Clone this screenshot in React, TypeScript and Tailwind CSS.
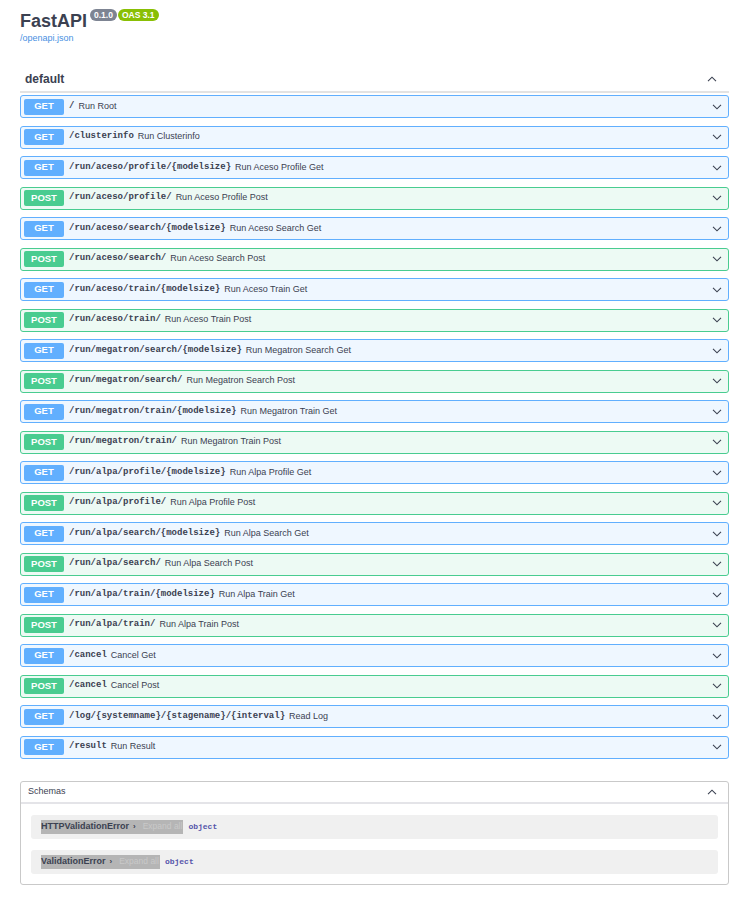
const ops: { method: 'GET' | 'POST'; path: string; summary: string }[] = [
  { method: 'GET', path: '/', summary: 'Run Root' },
  { method: 'GET', path: '/clusterinfo', summary: 'Run Clusterinfo' },
  { method: 'GET', path: '/run/aceso/profile/{modelsize}', summary: 'Run Aceso Profile Get' },
  { method: 'POST', path: '/run/aceso/profile/', summary: 'Run Aceso Profile Post' },
  { method: 'GET', path: '/run/aceso/search/{modelsize}', summary: 'Run Aceso Search Get' },
  { method: 'POST', path: '/run/aceso/search/', summary: 'Run Aceso Search Post' },
  { method: 'GET', path: '/run/aceso/train/{modelsize}', summary: 'Run Aceso Train Get' },
  { method: 'POST', path: '/run/aceso/train/', summary: 'Run Aceso Train Post' },
  { method: 'GET', path: '/run/megatron/search/{modelsize}', summary: 'Run Megatron Search Get' },
  { method: 'POST', path: '/run/megatron/search/', summary: 'Run Megatron Search Post' },
  { method: 'GET', path: '/run/megatron/train/{modelsize}', summary: 'Run Megatron Train Get' },
  { method: 'POST', path: '/run/megatron/train/', summary: 'Run Megatron Train Post' },
  { method: 'GET', path: '/run/alpa/profile/{modelsize}', summary: 'Run Alpa Profile Get' },
  { method: 'POST', path: '/run/alpa/profile/', summary: 'Run Alpa Profile Post' },
  { method: 'GET', path: '/run/alpa/search/{modelsize}', summary: 'Run Alpa Search Get' },
  { method: 'POST', path: '/run/alpa/search/', summary: 'Run Alpa Search Post' },
  { method: 'GET', path: '/run/alpa/train/{modelsize}', summary: 'Run Alpa Train Get' },
  { method: 'POST', path: '/run/alpa/train/', summary: 'Run Alpa Train Post' },
  { method: 'GET', path: '/cancel', summary: 'Cancel Get' },
  { method: 'POST', path: '/cancel', summary: 'Cancel Post' },
  { method: 'GET', path: '/log/{systemname}/{stagename}/{interval}', summary: 'Read Log' },
  { method: 'GET', path: '/result', summary: 'Run Result' },
]

function Chevron({ up = false }: { up?: boolean }) {
  return (
    <svg width="10" height="6" viewBox="0 0 10 6" className="shrink-0">
      <path
        d={up ? 'M1 5.2 5 1.2 9 5.2' : 'M1 0.8 5 4.8 9 0.8'}
        fill="none"
        stroke="#3b4151"
        strokeWidth="1.1"
      />
    </svg>
  )
}

function OpRow({ method, path, summary }: { method: 'GET' | 'POST'; path: string; summary: string }) {
  const get = method === 'GET'
  return (
    <div
      className={
        get
          ? 'mb-[7.5px] flex h-[23px] items-center rounded-[3px] border border-[#61affe] bg-[#eff7ff] pl-[3px] pr-[6px]'
          : 'mb-[7.5px] flex h-[23px] items-center rounded-[3px] border border-[#49cc90] bg-[#edfaf4] pl-[3px] pr-[6px]'
      }
    >
      <span
        className={
          get
            ? 'flex h-[16px] w-[40px] shrink-0 items-center justify-center rounded-[2px] bg-[#61affe] text-[9.5px] font-bold text-white'
            : 'flex h-[16px] w-[40px] shrink-0 items-center justify-center rounded-[2px] bg-[#49cc90] text-[9.5px] font-bold text-white'
        }
      >
        {method}
      </span>
      <span className="ml-[5px] font-['Liberation_Mono',monospace] text-[9px] font-bold text-[#3b4151]">{path}</span>
      <span className="ml-[4px] flex-1 text-[9px] text-[#3b4151]">{summary}</span>
      <Chevron />
    </div>
  )
}

function SchemaRow({ name }: { name: string }) {
  return (
    <div className="flex h-[24px] items-center rounded-[3px] bg-[#f0f0f0] px-[10px]">
      <span className="flex h-[14px] items-center bg-[#b5b5b5] pr-[1px]">
        <span className="text-[9px] font-bold text-[#3b4151]">{name}</span>
        <span className="ml-[4px] text-[8px] font-bold text-[#3b4151]">›</span>
        <span className="ml-[7px] text-[8.5px] text-[#c9c9c9]">Expand all</span>
      </span>
      <span className="ml-[5px] font-['Liberation_Mono',monospace] text-[8px] font-bold text-[#5555aa]">object</span>
    </div>
  )
}

export default function App() {
  return (
    <div className="min-h-screen bg-white px-5 pt-[9px] font-['Liberation_Sans',Arial,sans-serif] text-[#3b4151]">
      <div className="flex items-start">
        <h2 className="text-[18px] font-bold leading-[24px] text-[#3b4151]">FastAPI</h2>
        <span className="ml-[3px] flex h-[12px] items-center rounded-full bg-[#7d8492] px-[4px] text-[8.5px] font-bold text-white">
          0.1.0
        </span>
        <span className="ml-[1px] flex h-[12px] items-center rounded-full bg-[#89bf04] px-[4px] text-[8.5px] font-bold text-white">
          OAS 3.1
        </span>
      </div>
      <a className="block text-[9px] leading-[10px] text-[#4990e2]">/openapi.json</a>

      <div className="mt-[24px] flex h-[26px] items-center border-b-2 border-[#e3e3e3] pl-[5px] pr-[12px]">
        <h3 className="flex-1 text-[12px] font-bold">default</h3>
        <Chevron up />
      </div>
      <div className="pt-[2px]">
        {ops.map((op) => (
          <OpRow key={op.method + op.path} {...op} />
        ))}
      </div>

      <div className="mt-[22px] rounded-[3px] border border-[#c9c9c9]">
        <div className="flex h-[22px] items-center border-b-2 border-[#e4e4e8] pl-[7px] pr-[11px]">
          <h4 className="flex-1 text-[9px] text-[#3b4151]">Schemas</h4>
          <Chevron up />
        </div>
        <div className="flex flex-col gap-[11px] px-[10px] pb-[10px] pt-[11px]">
          <SchemaRow name="HTTPValidationError" />
          <SchemaRow name="ValidationError" />
        </div>
      </div>
    </div>
  )
}
